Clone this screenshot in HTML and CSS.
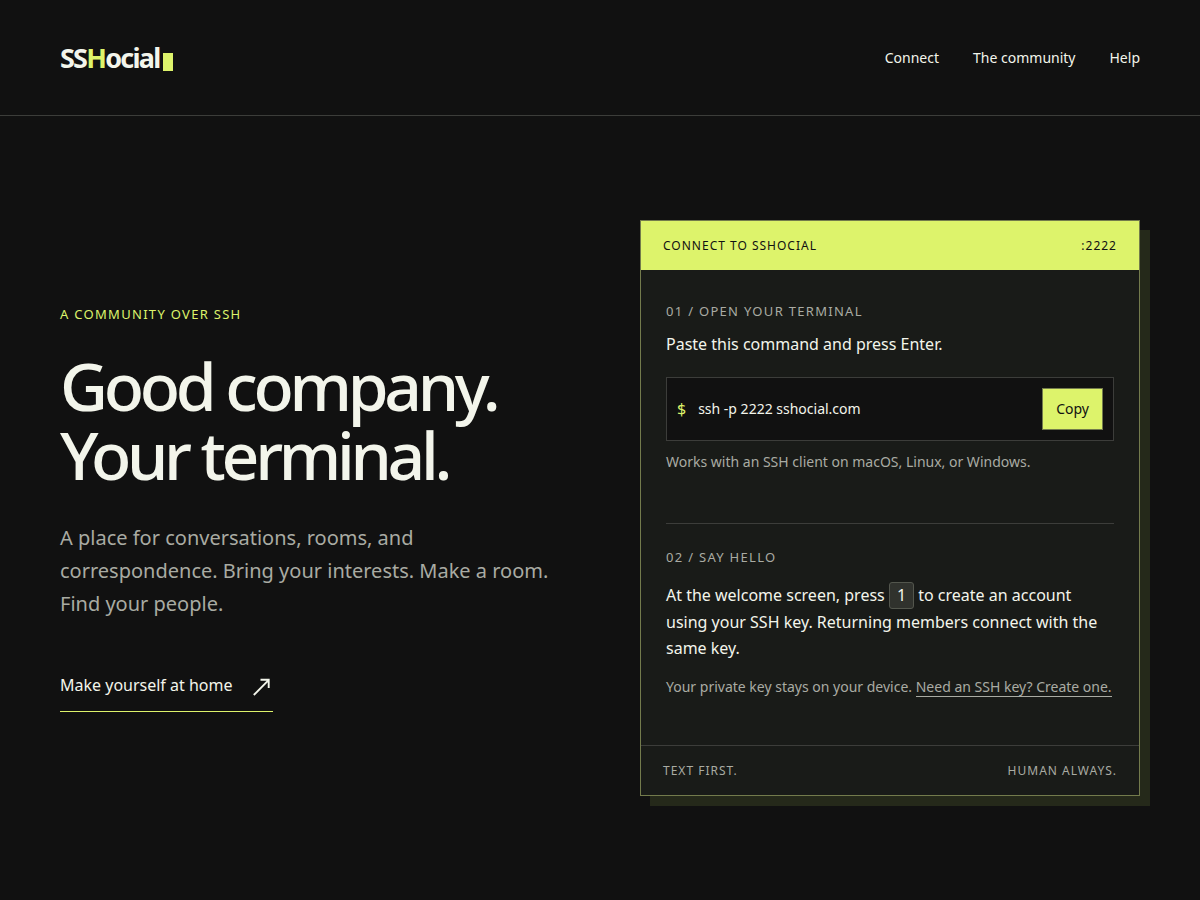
FILE: index.html
```html
<!DOCTYPE html>
<html lang="en">
<head>
    <meta charset="UTF-8">
    <meta name="viewport" content="width=device-width, initial-scale=1.0">
    <title>SSHocial</title>
    <link rel="stylesheet" href="styles.css">
</head>
<body>
    <header class="site-header">
        <a class="logo" href="#">SS<span class="accent">H</span>ocial<span class="cursor"></span></a>
        <nav class="site-nav">
            <a href="#connect">Connect</a>
            <a href="#community">The community</a>
            <a href="#help">Help</a>
        </nav>
    </header>
    <main class="hero">
        <section class="intro">
            <p class="eyebrow">A COMMUNITY OVER SSH</p>
            <h1>Good company.<br>Your terminal.</h1>
            <p class="lead">A place for conversations, rooms, and correspondence. Bring your interests. Make a room. Find your people.</p>
            <a class="cta" href="#connect">
                Make yourself at home
                <svg class="arrow" width="20" height="24" viewBox="0 0 20 24" fill="none" stroke="currentColor" stroke-width="1.9" aria-hidden="true">
                    <path d="M.8 22 15.3 7.3M7.5 6.8h8.2V15"/>
                </svg>
            </a>
        </section>
        <section class="card" id="connect">
            <div class="card-head">
                <span>CONNECT TO SSHOCIAL</span>
                <span>:2222</span>
            </div>
            <div class="card-body">
                <div class="step">
                    <p class="step-label">01 / OPEN YOUR TERMINAL</p>
                    <p>Paste this command and press Enter.</p>
                    <div class="command">
                        <span class="prompt">$</span>
                        <code id="cmd">ssh -p 2222 sshocial.com</code>
                        <button type="button" onclick="copyCommand()">Copy</button>
                    </div>
                    <p class="note">Works with an SSH client on macOS, Linux, or Windows.</p>
                </div>
                <div class="step">
                    <p class="step-label">02 / SAY HELLO</p>
                    <p>At the welcome screen, press <kbd>1</kbd> to create an account using your SSH key. Returning members connect with the same key.</p>
                    <p class="note">Your private key stays on your device. <a href="#help">Need an SSH key? Create one.</a></p>
                </div>
            </div>
            <div class="card-foot">
                <span>TEXT FIRST.</span>
                <span>HUMAN ALWAYS.</span>
            </div>
        </section>
    </main>
    <script>
        function copyCommand() {
            navigator.clipboard.writeText(document.getElementById('cmd').innerText);
        }
    </script>
</body>
</html>
```
FILE: styles.css
```css
* {
    margin: 0;
    padding: 0;
    box-sizing: border-box;
}

body {
    font-family: "Noto Sans", sans-serif;
    font-size: 16px;
    line-height: 26px;
    background-color: #111111;
    color: #f3f5eb;
}

a {
    color: inherit;
    text-decoration: none;
}

.site-header {
    display: flex;
    justify-content: space-between;
    align-items: center;
    padding: 36px 60px;
    border-bottom: 1px solid #3c3d3a;
}

.logo {
    font-size: 27px;
    line-height: 43px;
    font-weight: 700;
    letter-spacing: -0.065em;
}

.accent {
    color: #ddf36b;
}

.cursor {
    display: inline-block;
    width: 10px;
    height: 18px;
    margin-left: 4px;
    vertical-align: -3px;
    background-color: #ddf36b;
}

.site-nav {
    display: flex;
    gap: 34px;
    font-size: 14px;
}

.hero {
    display: grid;
    grid-template-columns: 1fr 1fr;
    gap: 80px;
    align-items: center;
    padding: 104px 60px 100px;
}

.eyebrow {
    font-size: 13px;
    line-height: 20px;
    letter-spacing: 0.1em;
    color: #ddf36b;
    margin-bottom: 27px;
}

h1 {
    font-size: 66px;
    line-height: 69px;
    font-weight: 500;
    letter-spacing: -0.065em;
    margin-bottom: 32px;
}

.lead {
    max-width: 490px;
    font-size: 20px;
    line-height: 33px;
    color: #a9aba3;
    margin-bottom: 48px;
}

.cta {
    display: inline-flex;
    align-items: center;
    gap: 20px;
    padding: 4px 0 13px;
    border-bottom: 1px solid #ddf36b;
}

.card {
    background-color: #191b18;
    border: 1px solid #737b4c;
    box-shadow: 10px 10px 0 #25291a;
}

.card-head, .card-foot {
    display: flex;
    justify-content: space-between;
    padding: 14px 22px;
    font-size: 12px;
    line-height: 21px;
    letter-spacing: 1px;
}

.card-head {
    background-color: #ddf36b;
    color: #111111;
}

.card-foot {
    border-top: 1px solid #3c3d3a;
    color: #a9aba3;
}

.card-body {
    padding: 0 25px;
}

.step {
    padding: 31px 0 49px;
}

.step + .step {
    padding-top: 23px;
    padding-bottom: 46px;
    border-top: 1px solid #3c3d3a;
}

.step-label {
    font-size: 13px;
    line-height: 20px;
    letter-spacing: 0.1em;
    color: #a9aba3;
    margin-bottom: 10px;
}

.command {
    display: flex;
    align-items: center;
    gap: 12px;
    margin: 20px 0 9px;
    padding: 10px;
    background-color: #111111;
    border: 1px solid #3c3d3a;
}

.prompt {
    color: #ddf36b;
}

.command code {
    flex: 1;
    font-family: inherit;
    font-size: 14px;
}

.command button {
    padding: 9px 13px;
    font-family: inherit;
    font-size: 14px;
    line-height: 22px;
    color: #111111;
    background-color: #ddf36b;
    border: 1px solid #737b4c;
    cursor: pointer;
}

kbd {
    display: inline-block;
    margin-top: 5px;
    padding: 0 7px;
    font-family: inherit;
    line-height: 25px;
    background-color: #30322d;
    border: 1px solid #53564d;
    border-radius: 3px;
}

.note {
    font-size: 14px;
    line-height: 24px;
    color: #a9aba3;
}

p + .note {
    margin-top: 14px;
}

.note a {
    border-bottom: 1px solid #a9aba3;
}
```
